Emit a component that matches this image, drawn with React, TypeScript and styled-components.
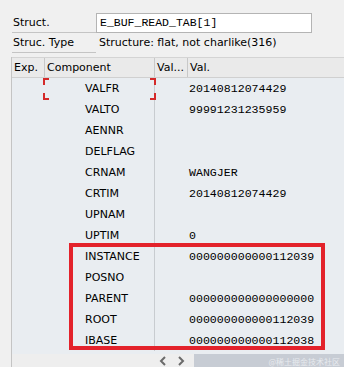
import React from "react";
import styled, { createGlobalStyle } from "styled-components";

const Global = createGlobalStyle`
  html, body { margin: 0; padding: 0; }
  body {
    background: #f0f0f0;
    width: 344px;
    height: 367px;
    overflow: hidden;
    font-family: "DejaVu Sans", Verdana, sans-serif;
    color: #000;
  }
`;

const Page = styled.div`
  position: relative;
  width: 344px;
  height: 367px;
  padding-top: 13px;
  box-sizing: border-box;
  display: flex;
  flex-direction: column;
`;

const FieldRow = styled.div`
  display: flex;
  align-items: stretch;
  height: 20px;
  padding-left: 12px;
`;

const Label = styled.div`
  width: 84px;
  box-sizing: border-box;
  padding-left: 1px;
  border-bottom: 1px solid #c4c4c4;
  font-size: 11px;
  line-height: 19px;
`;

const Input = styled.div`
  width: 216px;
  box-sizing: border-box;
  background: #fff;
  border: 1px solid #b4b4b4;
  padding-left: 3px;
  font-family: "Liberation Mono", "Courier New", monospace;
  font-size: 11.5px;
  line-height: 18px;
`;

const PlainValue = styled.div`
  padding-left: 3px;
  font-size: 11px;
  line-height: 19px;
`;

const Table = styled.div`
  margin-top: 4px;
  margin-left: 11px;
  border-left: 1px solid #c4c4c4;
  display: flex;
  flex-direction: column;
`;

const cols = "33px 110px 33px 1fr";

const HeaderRow = styled.div`
  display: grid;
  grid-template-columns: ${cols};
  height: 21px;
  background: #eaeaea;
  border-top: 1px solid #d4d4d4;
  border-bottom: 1px solid #d0d0d0;
  box-sizing: border-box;
`;

const HeadCell = styled.div<{ $sep?: boolean }>`
  font-size: 11px;
  line-height: 19px;
  padding-left: 2px;
  border-right: ${(p) => (p.$sep ? "1px solid #c8c8c8" : "none")};
  white-space: nowrap;
  overflow: hidden;
`;

const Body = styled.div`
  background: #e9edf1;
  display: flex;
  flex-direction: column;
`;

const Row = styled.div`
  display: grid;
  grid-template-columns: ${cols};
  height: 21px;
`;

const Cell = styled.div<{ $sep?: boolean; $indent?: number }>`
  font-size: 11px;
  line-height: 21px;
  padding-left: ${(p) => p.$indent ?? 0}px;
  border-right: ${(p) => (p.$sep ? "1px solid #c8ccd0" : "none")};
  white-space: nowrap;
`;

const ValCell = styled.div`
  grid-column: 3 / 5;
  padding-left: 34px;
  font-family: "Liberation Mono", "Courier New", monospace;
  font-size: 11.6px;
  line-height: 21px;
  white-space: nowrap;
`;

const BottomStrip = styled.div`
  height: 3px;
  background: #e9edf1;
`;

const ScrollRow = styled.div`
  display: flex;
  align-items: center;
  height: 14px;
  margin-left: 11px;
  border-left: 1px solid #c4c4c4;
  background: #eeeeee;
`;

const ScrollSpacer = styled.div`
  width: 142px;
`;

const Arrow = styled.div`
  width: 18px;
  display: flex;
  justify-content: center;
  align-items: center;
`;

const Thumb = styled.div`
  flex: 1;
  height: 14px;
  margin-left: 4px;
  background: #c7ccd4;
  display: flex;
  justify-content: flex-end;
  align-items: center;
  padding-right: 4px;
`;

const Watermark = styled.span`
  font-family: "Noto Sans CJK SC", sans-serif;
  font-size: 8px;
  color: #e8ebef;
`;

const Corner = styled.div<{ $v: "top" | "bottom"; $h: "left" | "right" }>`
  position: absolute;
  width: 4px;
  height: 5px;
  ${(p) => p.$v}: 0;
  ${(p) => p.$h}: 0;
  border-${(p) => p.$v}: 2px solid #d42a2a;
  border-${(p) => p.$h}: 2px solid #d42a2a;
`;

const Bracket = styled.div`
  position: absolute;
  left: 43px;
  top: 78px;
  width: 113px;
  height: 22px;
`;

const Highlight = styled.div`
  position: absolute;
  left: 69px;
  top: 243px;
  width: 256px;
  height: 107px;
  box-sizing: border-box;
  border: 4px solid #e3222b;
`;

const rows: [string, string][] = [
  ["VALFR", "20140812074429"],
  ["VALTO", "99991231235959"],
  ["AENNR", ""],
  ["DELFLAG", ""],
  ["CRNAM", "WANGJER"],
  ["CRTIM", "20140812074429"],
  ["UPNAM", ""],
  ["UPTIM", "0"],
  ["INSTANCE", "000000000000112039"],
  ["POSNO", ""],
  ["PARENT", "000000000000000000"],
  ["ROOT", "000000000000112039"],
  ["IBASE", "000000000000112038"],
];

const Chevron = ({ dir }: { dir: "l" | "r" }) => (
  <svg width="8" height="10" viewBox="0 0 8 10">
    <path
      d={dir === "l" ? "M6 1 L2 5 L6 9" : "M2 1 L6 5 L2 9"}
      fill="none"
      stroke="#6a6a6a"
      strokeWidth="2"
    />
  </svg>
);

export default function App() {
  return (
    <>
      <Global />
      <Page>
        <FieldRow>
          <Label>Struct.</Label>
          <Input>E_BUF_READ_TAB[1]</Input>
        </FieldRow>
        <FieldRow>
          <Label>Struc. Type</Label>
          <PlainValue>Structure: flat, not charlike(316)</PlainValue>
        </FieldRow>
        <Table>
          <HeaderRow>
            <HeadCell $sep>Exp.</HeadCell>
            <HeadCell $sep>Component</HeadCell>
            <HeadCell $sep>Val...</HeadCell>
            <HeadCell>Val.</HeadCell>
          </HeaderRow>
          <Body>
            {rows.map(([name, val]) => (
              <Row key={name}>
                <Cell />
                <Cell $sep $indent={40}>
                  {name}
                </Cell>
                <ValCell>{val}</ValCell>
              </Row>
            ))}
            <BottomStrip />
          </Body>
        </Table>
        <ScrollRow>
          <ScrollSpacer />
          <Arrow>
            <Chevron dir="l" />
          </Arrow>
          <Arrow>
            <Chevron dir="r" />
          </Arrow>
          <Thumb>
            <Watermark>@稀土掘金技术社区</Watermark>
          </Thumb>
        </ScrollRow>
        <Bracket>
          <Corner $v="top" $h="left" />
          <Corner $v="top" $h="right" />
          <Corner $v="bottom" $h="left" />
          <Corner $v="bottom" $h="right" />
        </Bracket>
        <Highlight />
      </Page>
    </>
  );
}
